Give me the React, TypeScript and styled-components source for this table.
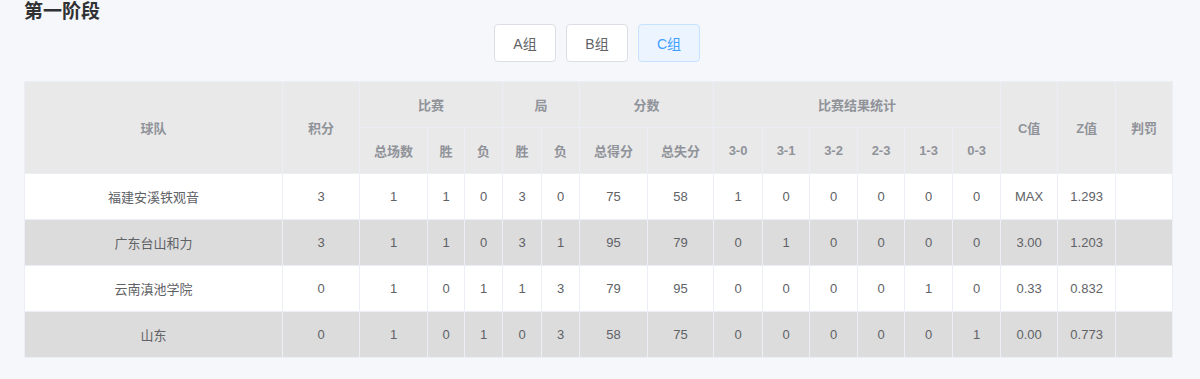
import React from 'react'
import styled, { createGlobalStyle } from 'styled-components'

const GlobalStyle = createGlobalStyle`
  html, body {
    margin: 0;
    padding: 0;
    background: #f5f7fa;
    font-family: "Liberation Sans", "Noto Sans CJK SC", sans-serif;
  }
`

const Page = styled.div`
  width: 1148px;
  margin-left: 24px;
`

const Title = styled.h2`
  margin: 0;
  height: 24px;
  line-height: 24px;
  font-size: 19px;
  font-weight: bold;
  color: #303133;
`

const Tabs = styled.div`
  display: flex;
  justify-content: center;
  gap: 10px;
  padding-right: 2px;
`

const TabButton = styled.button<{ $active?: boolean }>`
  width: 62px;
  height: 38px;
  padding: 0;
  border-radius: 4px;
  border: 1px solid ${(p) => (p.$active ? '#c6e2ff' : '#dcdfe6')};
  background: ${(p) => (p.$active ? '#ecf5ff' : '#fff')};
  color: ${(p) => (p.$active ? '#409eff' : '#606266')};
  font-family: inherit;
  font-size: 14px;
  cursor: pointer;
`

const Table = styled.table`
  margin-top: 19px;
  width: 1148px;
  table-layout: fixed;
  border-collapse: collapse;
  font-size: 13px;
  text-align: center;
`

const Th = styled.th`
  height: 45px;
  padding: 0;
  background: #e9e9e9;
  border: 1px solid #ebeef5;
  color: #909399;
  font-weight: bold;
`

const Row = styled.tr<{ $striped: boolean }>`
  background: ${(p) => (p.$striped ? '#dcdcdc' : '#fff')};
`

const Td = styled.td`
  height: 45px;
  padding: 0;
  border: 1px solid #ebeef5;
  color: #606266;
`

const widths = [258, 77, 68, 37, 38, 39, 38, 68, 66, 49, 47, 48, 47, 48, 48, 57, 58, 57]

const teams = [
  { name: '福建安溪铁观音', cells: ['3', '1', '1', '0', '3', '0', '75', '58', '1', '0', '0', '0', '0', '0', 'MAX', '1.293', ''] },
  { name: '广东台山和力', cells: ['3', '1', '1', '0', '3', '1', '95', '79', '0', '1', '0', '0', '0', '0', '3.00', '1.203', ''] },
  { name: '云南滇池学院', cells: ['0', '1', '0', '1', '1', '3', '79', '95', '0', '0', '0', '0', '1', '0', '0.33', '0.832', ''] },
  { name: '山东', cells: ['0', '1', '0', '1', '0', '3', '58', '75', '0', '0', '0', '0', '0', '1', '0.00', '0.773', ''] },
]

const subHeads = ['总场数', '胜', '负', '胜', '负', '总得分', '总失分', '3-0', '3-1', '3-2', '2-3', '1-3', '0-3']

const App = (): JSX.Element => {
  return (
    <Page>
      <GlobalStyle />
      <Title>第一阶段</Title>
      <Tabs>
        <TabButton>A组</TabButton>
        <TabButton>B组</TabButton>
        <TabButton $active>C组</TabButton>
      </Tabs>
      <Table>
        <colgroup>
          {widths.map((w, i) => (
            <col key={i} style={{ width: w }} />
          ))}
        </colgroup>
        <thead>
          <tr>
            <Th rowSpan={2}>球队</Th>
            <Th rowSpan={2}>积分</Th>
            <Th colSpan={3}>比赛</Th>
            <Th colSpan={2}>局</Th>
            <Th colSpan={2}>分数</Th>
            <Th colSpan={6}>比赛结果统计</Th>
            <Th rowSpan={2}>C值</Th>
            <Th rowSpan={2}>Z值</Th>
            <Th rowSpan={2}>判罚</Th>
          </tr>
          <tr>
            {subHeads.map((h, i) => (
              <Th key={i}>{h}</Th>
            ))}
          </tr>
        </thead>
        <tbody>
          {teams.map((t, r) => (
            <Row key={t.name} $striped={r % 2 === 1}>
              <Td>{t.name}</Td>
              {t.cells.map((c, i) => (
                <Td key={i}>{c}</Td>
              ))}
            </Row>
          ))}
        </tbody>
      </Table>
    </Page>
  )
}

export default App
